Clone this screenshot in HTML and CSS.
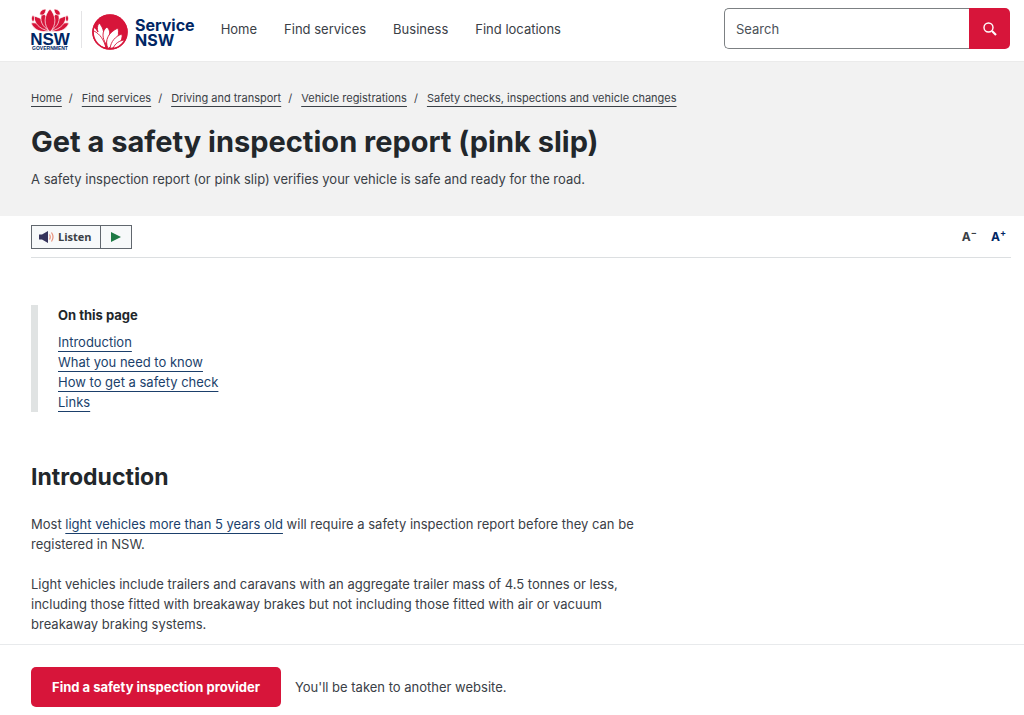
FILE: index.html
```
<!DOCTYPE html>
<html lang="en">

<head>
  <meta charset="UTF-8">
  <meta name="viewport" content="width=device-width, initial-scale=1.0">
  <title>Get a safety inspection report (pink slip) | Service NSW</title>
  <link rel="stylesheet" href="styles.css">
</head>

<body>

  <header class="header">
    <a class="logos" href="#" aria-label="Service NSW home">
      <svg class="logo-gov" viewBox="0 0 40 42" width="40" height="42">
        <g fill="#d7153a" stroke="#fff" stroke-width="0.7">
          <path d="M20 23C11 25 4 22 1 15c7-1 13 2 19 8z" />
          <path d="M20 23c9 2 16-1 19-8-7-1-13 2-19 8z" />
          <path d="M19 23C9 21 4 15 4 8c8 2 14 7 15 15z" />
          <path d="M21 23c10-2 15-8 15-15-8 2-14 7-15 15z" />
          <path d="M20 23C12 19 9 12 12 5c6 3 9 9 8 18z" />
          <path d="M20 23c8-4 11-11 8-18-6 3-9 9-8 18z" />
          <path d="M20 24C13 17 14 7 20 1c6 6 7 16 0 23z" />
          <path d="M10 7C9 4 12 1 16 1c0 2-1 5-3 6z" />
          <path d="M30 7c1-3-2-6-6-6 0 2 1 5 3 6z" />
          <path d="M3 14C1 12 1 9 3 7c2 2 2 5 0 7z" />
          <path d="M37 14c2-2 2-5 0-7-2 2-2 5 0 7z" />
        </g>
        <text class="logo-nsw" x="20" y="37" text-anchor="middle">NSW</text>
        <text class="logo-small" x="20" y="42" text-anchor="middle">GOVERNMENT</text>
      </svg>
      <span class="logo-divider"></span>
      <svg class="logo-mark" viewBox="0 0 36 36" width="36" height="36">
        <circle cx="18" cy="18" r="17.500" fill="#d7153a" />
        <g fill="#fff" stroke="#d7153a" stroke-width="0.9">
          <path d="M7 9c4 4 5 9 5 14l2 11C6 33 1 26 1 19c0-2 .5-4 1.500-6L6 18C5 15 5 12 7 9z" />
          <path d="M2 17c6 3 10 9 12 17" fill="none" />
          <path d="M15 13c3 3 3 6 2 9l-3 8c-2-3-3-6-3-9 0-3 1-6 4-8z" />
          <path d="M26 14c2 9-2 16-10 20.500C12 26 17 18 26 14z" />
          <path d="M30 20c1 7-4 13-12 14.500 1-7 5-12 12-14.500z" />
          <path d="M33 26c-2 5-6 8-12 8.500 2-5 6-8 12-8.500z" />
        </g>
        <circle cx="18" cy="18" r="17" fill="none" stroke="#d7153a" stroke-width="1.600" />
      </svg>
      <span class="logo-name">Service<br>NSW</span>
    </a>

    <nav class="main-nav" aria-label="Main">
      <a href="#">Home</a>
      <a href="#">Find services</a>
      <a href="#">Business</a>
      <a href="#">Find locations</a>
    </nav>

    <form class="search" role="search">
      <input type="search" placeholder="Search" aria-label="Search">
      <button type="submit" aria-label="Submit search">
        <svg viewBox="0 0 16 16" width="16" height="16" fill="none" stroke="#fff">
          <circle cx="6.500" cy="6.500" r="4.500" stroke-width="1.400" />
          <path d="M10 10l4 4" stroke-width="2.200" />
        </svg>
      </button>
    </form>
  </header>

  <section class="hero">
    <nav aria-label="Breadcrumb">
      <ol class="breadcrumb">
        <li><a href="#">Home</a></li>
        <li><a href="#">Find services</a></li>
        <li><a href="#">Driving and transport</a></li>
        <li><a href="#">Vehicle registrations</a></li>
        <li><a href="#">Safety checks, inspections and vehicle changes</a></li>
      </ol>
    </nav>
    <h1>Get a safety inspection report (pink slip)</h1>
    <p>A safety inspection report (or pink slip) verifies your vehicle is safe and ready for the road.</p>
  </section>

  <main class="content">
    <div class="tools">
      <div class="listen">
        <button type="button">
          <svg viewBox="0 0 16 14" width="16" height="14">
            <path d="M0 4.500h3L9 1v12L3 9.500H0z" fill="#36345c" />
            <path d="M10.500 4.500q1.500 2.500 0 5M12.500 2.500q3 4.500 0 9" fill="none" stroke="#e8927c" stroke-width="1.200" />
          </svg>
          Listen
        </button>
        <button type="button" aria-label="Play">
          <svg viewBox="0 0 10 12" width="10" height="12">
            <path d="M0 1l10 5-10 5z" fill="#1f7a45" />
          </svg>
        </button>
      </div>
      <div class="text-size">
        <button type="button" aria-label="Decrease text size">A<sup>−</sup></button>
        <button class="larger" type="button" aria-label="Increase text size">A<sup>+</sup></button>
      </div>
    </div>

    <nav class="on-page" aria-labelledby="on-page-title">
      <h2 id="on-page-title">On this page</h2>
      <ul>
        <li><a href="#introduction">Introduction</a></li>
        <li><a href="#">What you need to know</a></li>
        <li><a href="#">How to get a safety check</a></li>
        <li><a href="#">Links</a></li>
      </ul>
    </nav>

    <article class="article">
      <h2 id="introduction">Introduction</h2>
      <p>Most <a href="#">light vehicles more than 5 years old</a> will require a safety inspection report before they can be registered in NSW.</p>
      <p>Light vehicles include trailers and caravans with an aggregate trailer mass of 4.5 tonnes or less, including those fitted with breakaway brakes but not including those fitted with air or vacuum breakaway braking systems.</p>
    </article>
  </main>

  <footer class="action-bar">
    <a class="btn" href="#">Find a safety inspection provider</a>
    <span>You'll be taken to another website.</span>
  </footer>

</body>

</html>
```
FILE: styles.css
```
* {
  box-sizing: border-box;
}

body {
  display: flex;
  flex-direction: column;
  min-height: 100vh;
  margin: 0;
  font-family: Inter, "Open Sans", sans-serif;
  font-size: 13px;
  line-height: 20px;
  color: #3a4046;
  background: white;
}

h1,
h2,
p,
ul,
ol {
  margin: 0;
  padding: 0;
}

h1,
h2 {
  color: #22272b;
}

ul,
ol {
  list-style: none;
}

a {
  color: #1b3f6b;
  text-decoration-thickness: 1px;
  text-underline-offset: 4px;
  text-decoration-skip-ink: none;
}

button,
input {
  font: inherit;
  color: inherit;
}

.header {
  display: flex;
  align-items: center;
  height: 62px;
  padding: 0 14px 4px 30px;
  border-bottom: 1px solid #ebebeb;
}

.logos {
  display: flex;
  align-items: flex-end;
  text-decoration: none;
}

.logo-nsw,
.logo-small {
  font-family: "Liberation Sans", Arial, sans-serif;
  font-weight: bold;
  fill: #002664;
}

.logo-nsw {
  font-size: 17px;
}

.logo-small {
  font-size: 5px;
}

.logo-divider {
  width: 1px;
  height: 37px;
  margin: 0 10px 2px 11px;
  background: #e4e4e6;
}

.logo-name {
  margin: 0 0 2px 7px;
  font-size: 16px;
  font-weight: 700;
  line-height: 15px;
  color: #002664;
}

.main-nav {
  display: flex;
  gap: 27px;
  margin-left: 26px;
}

.main-nav a {
  color: #3a4046;
  text-decoration: none;
}

.search {
  display: flex;
  width: 286px;
  height: 41px;
  margin-left: auto;
}

.search input {
  flex: 1;
  min-width: 0;
  padding: 0 11px;
  background: white;
  border: 1px solid #7c8083;
  border-right: 0;
  border-radius: 5px 0 0 5px;
}

.search input::placeholder {
  color: #4b5157;
}

.search button {
  display: flex;
  align-items: center;
  justify-content: center;
  width: 41px;
  padding: 0;
  background: #d7153a;
  border: 0;
  border-radius: 0 5px 5px 0;
}

.hero {
  padding: 26px 31px 27px;
  background: #f2f2f2;
}

.breadcrumb {
  display: flex;
  flex-wrap: wrap;
  font-size: 11px;
}

.breadcrumb a {
  color: #3a4046;
}

.breadcrumb li + li::before {
  content: "/";
  margin: 0 9px 0 7px;
}

.hero h1 {
  margin: 15px 0 9px;
  font-size: 29px;
  line-height: 37px;
}

.content {
  padding: 0 13px 0 31px;
}

.tools {
  display: flex;
  align-items: center;
  justify-content: space-between;
  height: 42px;
  border-bottom: 1px solid #dcdfe1;
}

.listen {
  display: flex;
  height: 24px;
  border: 1px solid #61676e;
}

.listen button {
  display: flex;
  align-items: center;
  gap: 3px;
  padding: 0 8px 0 7px;
  font-family: "Open Sans", sans-serif;
  font-size: 11px;
  font-weight: 700;
  background: #f7f9fa;
  border: 0;
}

.listen button + button {
  padding: 0 10px;
  border-left: 1px solid #61676e;
}

.text-size {
  display: flex;
  gap: 14px;
  padding-right: 5px;
}

.text-size button {
  padding: 0;
  font-size: 12px;
  font-weight: 700;
  line-height: 16px;
  background: none;
  border: 0;
}

.text-size sup {
  font-size: 9px;
  line-height: 0;
}

.text-size .larger {
  color: #002664;
}

.on-page {
  margin-top: 47px;
  padding-left: 20px;
  border-left: 7px solid #e0e3e3;
}

.on-page h2 {
  margin-bottom: 7px;
  font-size: 13px;
}

.article {
  max-width: 620px;
  margin-top: 49px;
}

.article h2 {
  margin-bottom: 21px;
  font-size: 23px;
  line-height: 32px;
}

.article p + p {
  margin-top: 20px;
}

.action-bar {
  position: sticky;
  bottom: 0;
  display: flex;
  align-items: center;
  gap: 14px;
  margin-top: auto;
  padding: 22px 31px 8px;
  background: white;
  border-top: 1px solid #e8eaec;
}

.btn {
  padding: 10px 21px;
  font-weight: 700;
  color: white;
  text-decoration: none;
  background: #d7153a;
  border-radius: 5px;
}
```
